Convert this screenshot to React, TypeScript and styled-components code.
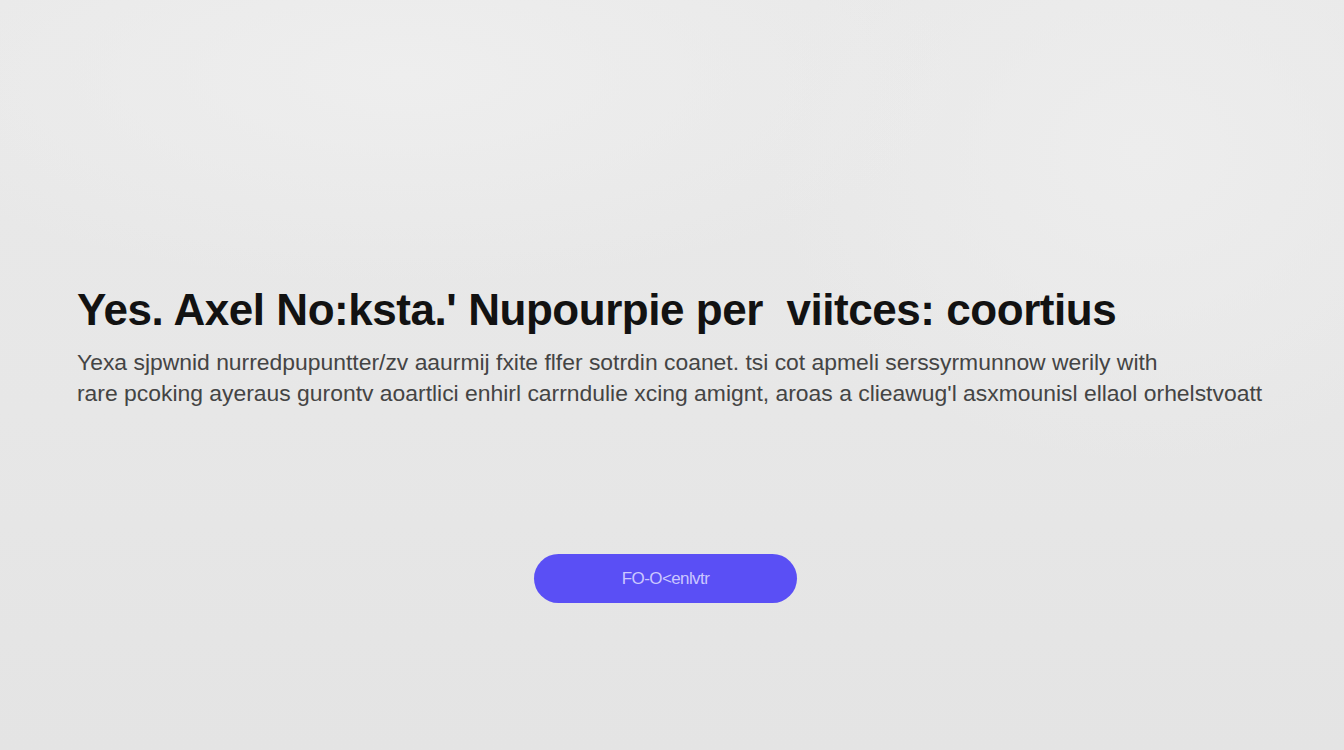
import styled, { createGlobalStyle } from 'styled-components';

const GlobalStyle = createGlobalStyle`
  html, body {
    margin: 0;
    padding: 0;
  }
  body {
    font-family: 'Liberation Sans', Arial, sans-serif;
    background: #e8e8e8;
  }
`;

const Section = styled.section`
  width: 1344px;
  height: 750px;
  box-sizing: border-box;
  padding: 283px 77px 0;
  display: flex;
  flex-direction: column;
  background:
    radial-gradient(ellipse 60% 40% at 30% 10%, #eeeeee 0%, rgba(238, 238, 238, 0) 70%),
    radial-gradient(ellipse 40% 60% at 85% 20%, #ededed 0%, rgba(237, 237, 237, 0) 70%),
    linear-gradient(180deg, #e9e9e9 0%, #e7e7e7 55%, #e4e4e4 100%);
  overflow: hidden;
`;

const Title = styled.h1`
  margin: 0;
  font-family: 'Liberation Sans', Arial, sans-serif;
  font-size: 44px;
  font-weight: 700;
  line-height: 54px;
  letter-spacing: -0.45px;
  color: #121212;
  white-space: nowrap;
`;

const Description = styled.p`
  margin: 10px 0 0;
  font-family: 'Liberation Sans', Arial, sans-serif;
  font-size: 22.9px;
  line-height: 31px;
  color: #444444;
  white-space: nowrap;
`;

const Actions = styled.div`
  display: flex;
  justify-content: center;
  margin-top: 145px;
  padding-right: 13px;
`;

const Button = styled.a`
  display: flex;
  align-items: center;
  justify-content: center;
  width: 263px;
  height: 49px;
  border-radius: 25px;
  background: #5a4ff5;
  color: #cbc7ff;
  font-family: 'Liberation Sans', Arial, sans-serif;
  font-size: 17px;
  letter-spacing: -0.6px;
  text-decoration: none;
`;

export default function App() {
  return (
    <>
      <GlobalStyle />
      <Section>
        <Title>Yes. Axel No:ksta.' Nupourpie per&nbsp; viitces: coortius</Title>
        <Description>
          Yexa sjpwnid nurredpupuntter/zv aaurmij fxite flfer sotrdin coanet. tsi cot apmeli serssyrmunnow werily with
          <br />
          rare pcoking ayeraus gurontv aoartlici enhirl carrndulie xcing amignt, aroas a clieawug'l asxmounisl ellaol orhelstvoatt
        </Description>
        <Actions>
          <Button href="#">FO-O&lt;enlvtr</Button>
        </Actions>
      </Section>
    </>
  );
}
